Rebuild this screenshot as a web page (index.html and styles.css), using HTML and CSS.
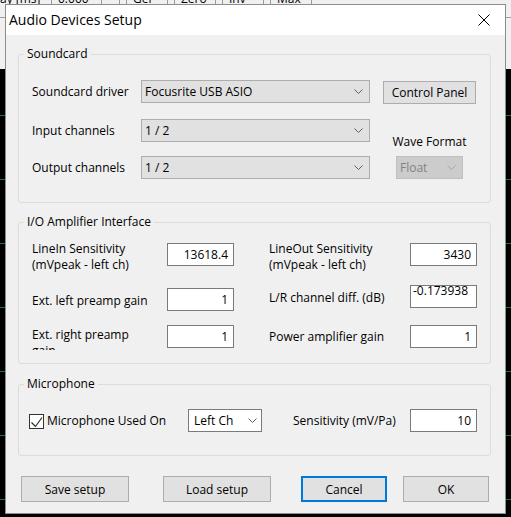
FILE: index.html
```html
<!DOCTYPE html>
<html>
<head>
<meta charset="utf-8">
<title>Audio Devices Setup</title>
<link rel="stylesheet" href="styles.css">
</head>
<body>
<div class="toolbar">
  <span class="tb-item tb-a">lay [ms]</span>
  <span class="tb-item tb-b">0.000</span>
  <span class="tb-item tb-c"></span>
  <span class="tb-btn">Gel</span>
  <span class="tb-btn">Zero</span>
  <span class="tb-btn">Inv</span>
  <span class="tb-btn">Max</span>
</div>

<div class="dialog">
  <div class="titlebar">
    <span class="title">Audio Devices Setup</span>
    <svg class="close" width="12" height="12" viewBox="0 0 12 12"><path d="M0.5 0.5L11.5 11.5M11.5 0.5L0.5 11.5" stroke="#000" stroke-width="1" fill="none"/></svg>
  </div>

  <div class="client">
    <section class="group g-sound">
      <div class="group-title">Soundcard</div>
      <div class="sc-body">
        <div class="sc-left">
          <div class="sc-row">
            <span class="lbl lbl-sc">Soundcard driver</span>
            <div class="combo combo-wide"><span>Focusrite USB ASIO</span><svg class="chev" width="9" height="5" viewBox="0 0 9 5"><path d="M0.5 0.5L4.5 4.5L8.5 0.5" fill="none" stroke="#606060"/></svg></div>
          </div>
          <div class="sc-row sc-row2">
            <span class="lbl lbl-sc">Input channels</span>
            <div class="combo combo-wide"><span>1 / 2</span><svg class="chev" width="9" height="5" viewBox="0 0 9 5"><path d="M0.5 0.5L4.5 4.5L8.5 0.5" fill="none" stroke="#606060"/></svg></div>
          </div>
          <div class="sc-row sc-row3">
            <span class="lbl lbl-sc">Output channels</span>
            <div class="combo combo-wide"><span>1 / 2</span><svg class="chev" width="9" height="5" viewBox="0 0 9 5"><path d="M0.5 0.5L4.5 4.5L8.5 0.5" fill="none" stroke="#606060"/></svg></div>
          </div>
        </div>
        <div class="sc-right">
          <div class="btn btn-cp">Control Panel</div>
          <div class="wave">
            <div class="wave-lbl">Wave Format</div>
            <div class="combo combo-dis"><span>Float</span><svg class="chev" width="9" height="5" viewBox="0 0 9 5"><path d="M0.5 0.5L4.5 4.5L8.5 0.5" fill="none" stroke="#a8a8a8"/></svg></div>
          </div>
        </div>
      </div>
    </section>

    <section class="group g-amp">
      <div class="group-title">I/O Amplifier Interface</div>
      <div class="amp-body">
        <div class="amp-col amp-left">
          <div class="amp-row">
            <span class="lbl two">LineIn Sensitivity<br>(mVpeak - left ch)</span>
            <div class="field">13618.4</div>
          </div>
          <div class="amp-row l2">
            <span class="lbl one">Ext. left preamp gain</span>
            <div class="field">1</div>
          </div>
          <div class="amp-row l3">
            <span class="lbl clip">Ext. right preamp gain</span>
            <div class="field">1</div>
          </div>
        </div>
        <div class="amp-col amp-right">
          <div class="amp-row">
            <span class="lbl two">LineOut Sensitivity<br>(mVpeak - left ch)</span>
            <div class="field">3430</div>
          </div>
          <div class="amp-row r2">
            <span class="lbl one">L/R channel diff. (dB)</span>
            <div class="field scrolled">-0.173938</div>
          </div>
          <div class="amp-row r3">
            <span class="lbl one r3lbl">Power amplifier gain</span>
            <div class="field">1</div>
          </div>
        </div>
      </div>
    </section>

    <section class="group g-mic">
      <div class="group-title">Microphone</div>
      <div class="mic-body">
        <div class="chk-wrap">
          <span class="chk"><svg width="13" height="13" viewBox="0 0 13 13"><path d="M1.5 7.5L5.5 11.5L12 2.5" fill="none" stroke="#222" stroke-width="1.1"/></svg></span>
          <span class="chk-lbl">Microphone Used On</span>
        </div>
        <div class="combo combo-white"><span>Left Ch</span><svg class="chev" width="9" height="5" viewBox="0 0 9 5"><path d="M0.5 0.5L4.5 4.5L8.5 0.5" fill="none" stroke="#606060"/></svg></div>
        <span class="lbl sens-lbl">Sensitivity (mV/Pa)</span>
        <div class="field">10</div>
      </div>
    </section>

    <div class="buttons">
      <div class="btn btn-save">Save setup</div>
      <div class="btn btn-load">Load setup</div>
      <div class="btn btn-cancel">Cancel</div>
      <div class="btn btn-ok">OK</div>
    </div>
  </div>
</div>
</body>
</html>
```

FILE: styles.css
```css
* { box-sizing: border-box; }

html, body { margin: 0; padding: 0; }

body {
  width: 511px;
  height: 517px;
  overflow: hidden;
  position: relative;
  font-family: "Open Sans", "Noto Sans", sans-serif;
  font-size: 12px;
  color: #000;
  background:
    linear-gradient(#f0f0f0, #f0f0f0) 0 0 / 100% 69px no-repeat,
    repeating-linear-gradient(to bottom, transparent 0, transparent 51px, #2f6f2f 51px, #2f6f2f 52px, transparent 52px, transparent 64px),
    #000;
}

/* window behind the dialog */
.toolbar {
  position: absolute;
  top: -10px;
  left: -3px;
  width: 520px;
  height: 28px;
  display: flex;
  border-bottom: 1px solid #a0a0a0;
  background: #f0f0f0;
}
.tb-item, .tb-btn {
  height: 18px;
  line-height: 18px;
  white-space: nowrap;
  border-right: 1px solid #9a9a9a;
}
.tb-a { width: 55px; }
.tb-b { width: 50px; padding-left: 6px; }
.tb-c { width: 18px; }
.tb-btn {
  width: 42px;
  margin-left: 6px;
  padding-left: 6px;
  border-left: 1px solid #9a9a9a;
}

/* dialog */
.dialog {
  position: absolute;
  left: 5px;
  top: 4px;
  width: 501px;
  border: 1px solid #8c8c8c;
  background: #f0f0f0;
}

.titlebar {
  height: 30px;
  background: #fff;
  display: flex;
  align-items: center;
  padding-left: 3px;
}
.title { font-size: 14px; line-height: 18px; }
.close { margin-left: auto; margin-right: 15px; }

.client { padding: 19px 14px 11px 12px; }

.group {
  border: 1px solid #dcdcdc;
  border-radius: 3px;
}
.group-title {
  margin: -10px 0 0 5px;
  padding: 0 3px;
  width: max-content;
  line-height: 17px;
  background: #f0f0f0;
}

.lbl { line-height: 16px; white-space: nowrap; }

/* combos */
.combo {
  height: 23px;
  display: flex;
  align-items: center;
  border: 1px solid #adadad;
  background: #e1e1e1;
  padding-left: 3px;
  white-space: nowrap;
}
.combo .chev { margin-left: auto; margin-right: 6px; flex: none; }
.combo-wide { width: 229px; }
.combo-dis {
  width: 67px;
  background: #cccccc;
  border-color: #bfbfbf;
  color: #838383;
}
.combo-white {
  width: 74px;
  background: #fff;
  border-color: #7a7a7a;
  padding-left: 5px;
}
.combo-white .chev { margin-right: 4px; }

/* buttons */
.btn {
  height: 23px;
  border: 1px solid #adadad;
  background: #e1e1e1;
  display: flex;
  align-items: center;
  justify-content: center;
  white-space: nowrap;
}

/* soundcard group */
.g-sound { padding-bottom: 23px; }
.sc-body { display: flex; margin-top: 18px; padding-left: 13px; }
.sc-left { width: 338px; }
.sc-row { display: flex; align-items: center; height: 23px; }
.sc-row2 { margin-top: 16px; }
.sc-row3 { margin-top: 14px; }
.lbl-sc { width: 109px; }
.sc-right {
  margin-left: 13px;
  width: 93px;
  display: flex;
  flex-direction: column;
  align-items: center;
  justify-content: space-between;
}
.btn-cp { width: 93px; margin-top: 1px; }
.wave { display: flex; flex-direction: column; align-items: center; }
.wave-lbl { line-height: 17px; margin-bottom: 6px; }

/* amplifier group */
.g-amp { margin-top: 19px; padding-bottom: 15px; }
.amp-body { display: flex; margin-top: 13px; padding-left: 13px; }
.amp-col { display: flex; flex-direction: column; }
.amp-left { width: 202px; }
.amp-right { width: 208px; margin-left: 35px; }
.amp-row {
  display: flex;
  align-items: flex-start;
  justify-content: space-between;
  height: 23px;
}
.amp-row .two { margin-top: -2px; }
.amp-row .one { margin-top: 5px; }
.amp-row .r3lbl { margin-top: 4px; }
.amp-row .clip {
  margin-top: 2px;
  width: 120px;
  height: 23px;
  overflow: hidden;
  white-space: normal;
}
.l2 { margin-top: 22px; }
.l3 { margin-top: 14px; }
.r2 { margin-top: 19px; }
.r3 { margin-top: 17px; }

.field {
  width: 67px;
  height: 23px;
  flex: none;
  border: 1px solid #7a7a7a;
  background: #fff;
  text-align: right;
  padding-right: 5px;
  line-height: 21px;
  white-space: nowrap;
  overflow: hidden;
}
.field.scrolled {
  text-align: left;
  padding: 0 0 0 2px;
  line-height: 10px;
}

/* microphone group */
.g-mic { margin-top: 20px; padding-bottom: 23px; }
.mic-body { display: flex; align-items: center; margin-top: 17px; height: 23px; padding-left: 10px; }
.chk-wrap { width: 159px; display: flex; align-items: center; }
.chk {
  width: 15px;
  height: 15px;
  border: 1px solid #333;
  background: #fff;
  display: flex;
  margin-top: 2px;
}
.chk-lbl { margin-left: 3px; }
.sens-lbl { margin-left: 31px; width: 117px; }

/* bottom buttons */
.buttons { display: flex; margin-top: 20px; padding-left: 3px; }
.buttons .btn { height: 26px; }
.btn-save { width: 108px; }
.btn-load { width: 108px; margin-left: 34px; }
.btn-cancel { width: 86px; margin-left: 30px; border: 2px solid #0078d7; }
.btn-ok { width: 86px; margin-left: 16px; }
```
